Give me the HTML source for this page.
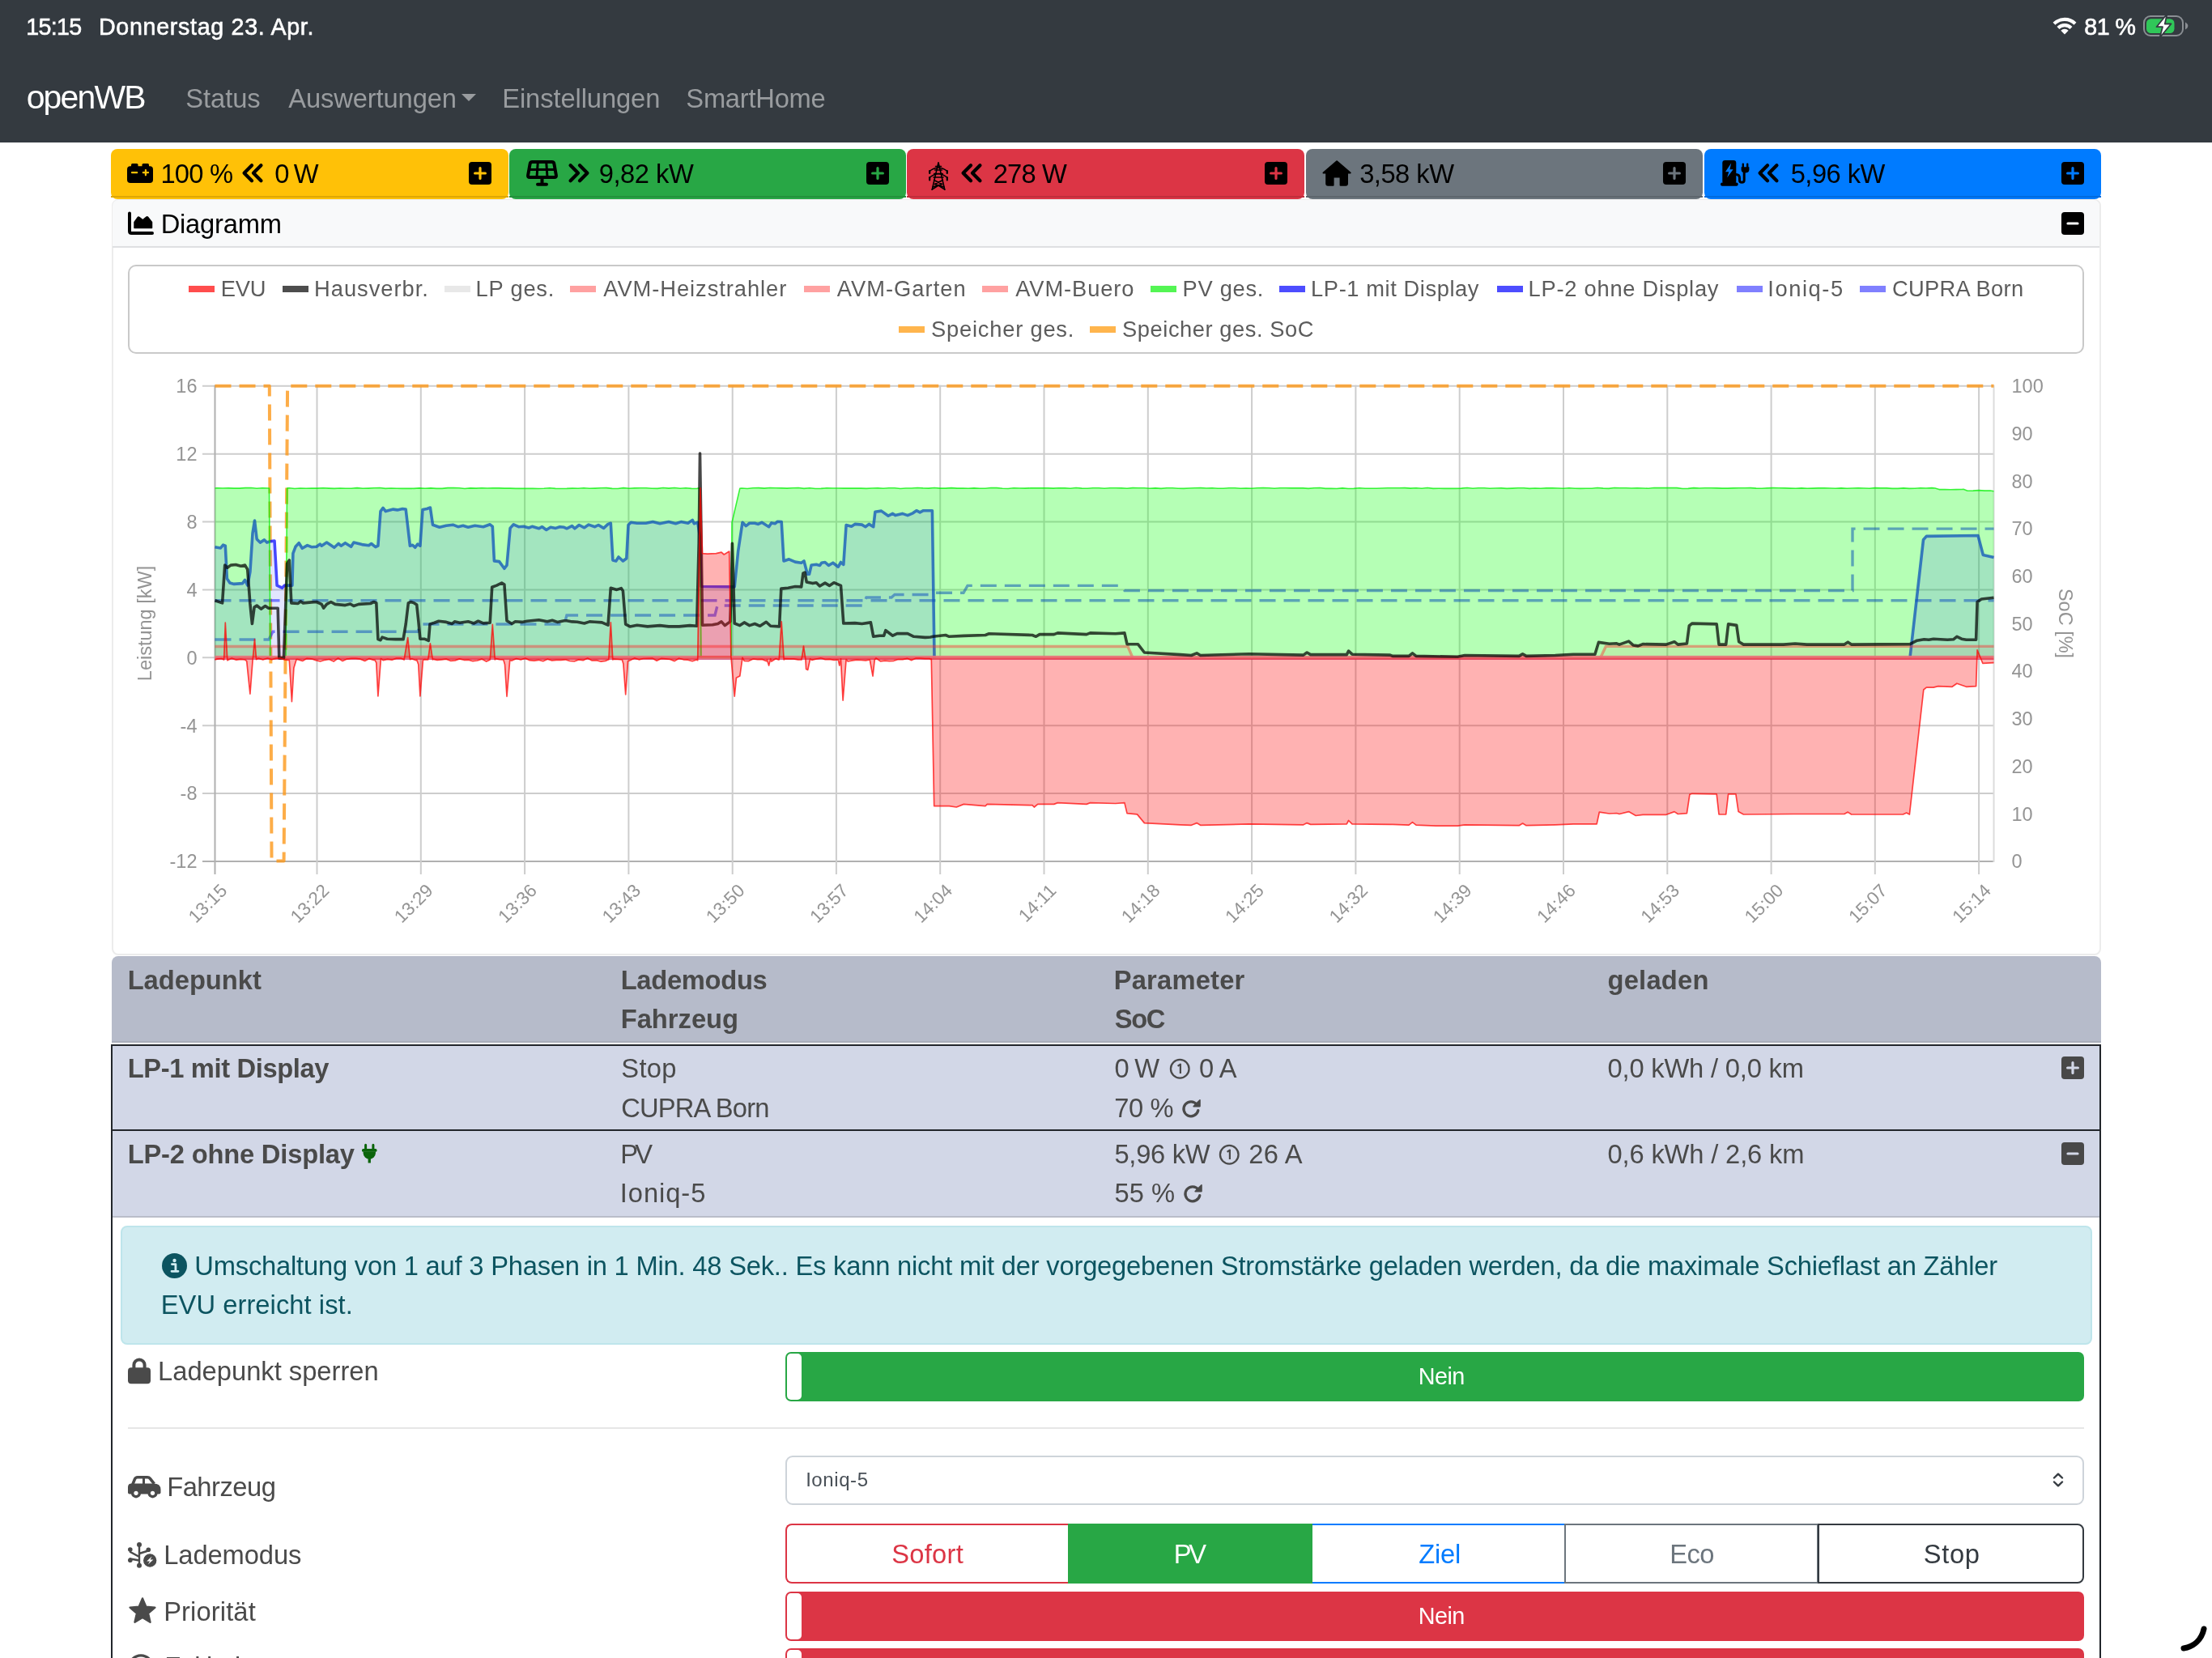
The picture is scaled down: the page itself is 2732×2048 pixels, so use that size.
<!DOCTYPE html><html><head><meta charset="utf-8"><title>openWB</title><style>
html,body{margin:0;padding:0;background:#fff;}
body{width:2732px;height:2048px;overflow:hidden;position:relative;font-family:"Liberation Sans",sans-serif;}
.t{position:absolute;white-space:nowrap;}
.r{position:absolute;box-sizing:border-box;}
#w{position:absolute;left:0;top:0;width:2732px;height:2048px;will-change:transform;}
</style></head><body><div id="w">
<div class="r" style="left:0px;top:0px;width:2732px;height:176px;background:#343a40;"></div>
<div class="t" style="left:32.15px;top:18.77px;font-size:28.62px;line-height:28.62px;letter-spacing:-0.640px;color:#fff;-webkit-text-stroke:0.6px #fff;">15:15</div>
<div class="t" style="left:122.01px;top:18.77px;font-size:28.62px;line-height:28.62px;letter-spacing:0.698px;color:#fff;-webkit-text-stroke:0.6px #fff;">Donnerstag 23. Apr.</div>
<div class="t" style="left:2574.36px;top:18.67px;font-size:28.62px;line-height:28.62px;letter-spacing:-0.502px;color:#fff;-webkit-text-stroke:0.6px #fff;">81 %</div>
<svg class="r" style="left:2535px;top:21px;overflow:visible" width="30" height="22" viewBox="0 0 30 22"><g fill="none" stroke="#fff" stroke-width="4.2"><path d="M2 8.3A18.5 18.5 0 0 1 28 8.3" /><path d="M7 13.4A11.4 11.4 0 0 1 23 13.4"/></g><path d="M15 21.5L10.3 16.8A6.6 6.6 0 0 1 19.7 16.8Z" fill="#fff"/></svg>
<svg class="r" style="left:2647px;top:19px;overflow:visible" width="56" height="26" viewBox="0 0 56 26"><rect x="1" y="1" width="48" height="24" rx="8" fill="none" stroke="#8a8e93" stroke-width="2"/><path d="M52 8.6Q55.3 10.3 55.3 13Q55.3 15.7 52 17.4Z" fill="#8a8e93"/><rect x="4" y="4.2" width="34.5" height="17.8" rx="5.5" fill="#30c759"/><path d="M29.5 -1.8L16.5 14.2H24L20.5 27.5L34.5 10.5H26.8Z" fill="#fff" stroke="#343a40" stroke-width="1.8" stroke-linejoin="round"/></svg>
<div class="t" style="left:32.66px;top:99.60px;font-size:40.88px;line-height:40.88px;letter-spacing:-1.779px;color:#fff;">openWB</div>
<div class="t" style="left:229.33px;top:106.02px;font-size:32.7px;line-height:32.7px;letter-spacing:-0.078px;color:#999c9f;">Status</div>
<div class="t" style="left:356.30px;top:106.02px;font-size:32.7px;line-height:32.7px;letter-spacing:-0.117px;color:#999c9f;">Auswertungen</div>
<div class="r" style="left:570px;top:116px;width:0;height:0;border-left:9px solid transparent;border-right:9px solid transparent;border-top:9px solid #999c9f;"></div>
<div class="t" style="left:620.18px;top:106.02px;font-size:32.7px;line-height:32.7px;letter-spacing:-0.090px;color:#999c9f;">Einstellungen</div>
<div class="t" style="left:847.33px;top:106.02px;font-size:32.7px;line-height:32.7px;letter-spacing:-0.247px;color:#999c9f;">SmartHome</div>
<div class="r" style="left:137px;top:184px;width:490.5px;height:62px;background:#ffc107;border-radius:8px;"></div>
<div class="r" style="left:137px;top:242px;width:490.5px;height:2px;background:#dea806;"></div>
<svg class="r" style="left:578.5px;top:200px;overflow:visible" width="28" height="28" viewBox="0 0 28 28"><rect width="28" height="28" rx="4" fill="#000"/><path d="M7.6 14H20.4M14 7.6V20.4" stroke="#ffc107" stroke-width="3.2" stroke-linecap="round"/></svg>
<div class="r" style="left:628.5px;top:184px;width:490.5px;height:62px;background:#28a745;border-radius:8px;"></div>
<div class="r" style="left:628.5px;top:242px;width:490.5px;height:2px;background:#23913c;"></div>
<svg class="r" style="left:1070.0px;top:200px;overflow:visible" width="28" height="28" viewBox="0 0 28 28"><rect width="28" height="28" rx="4" fill="#000"/><path d="M7.6 14H20.4M14 7.6V20.4" stroke="#28a745" stroke-width="3.2" stroke-linecap="round"/></svg>
<div class="r" style="left:1120px;top:184px;width:490.5px;height:62px;background:#dc3545;border-radius:8px;"></div>
<div class="r" style="left:1120px;top:242px;width:490.5px;height:2px;background:#c02e3c;"></div>
<svg class="r" style="left:1561.5px;top:200px;overflow:visible" width="28" height="28" viewBox="0 0 28 28"><rect width="28" height="28" rx="4" fill="#000"/><path d="M7.6 14H20.4M14 7.6V20.4" stroke="#dc3545" stroke-width="3.2" stroke-linecap="round"/></svg>
<div class="r" style="left:1612.5px;top:184px;width:490.5px;height:62px;background:#6c757d;border-radius:8px;"></div>
<div class="r" style="left:1612.5px;top:242px;width:490.5px;height:2px;background:#5e666d;"></div>
<svg class="r" style="left:2054.0px;top:200px;overflow:visible" width="28" height="28" viewBox="0 0 28 28"><rect width="28" height="28" rx="4" fill="#000"/><path d="M7.6 14H20.4M14 7.6V20.4" stroke="#6c757d" stroke-width="3.2" stroke-linecap="round"/></svg>
<div class="r" style="left:2104.5px;top:184px;width:490.5px;height:62px;background:#007bff;border-radius:8px;"></div>
<div class="r" style="left:2104.5px;top:242px;width:490.5px;height:2px;background:#006bde;"></div>
<svg class="r" style="left:2546.0px;top:200px;overflow:visible" width="28" height="28" viewBox="0 0 28 28"><rect width="28" height="28" rx="4" fill="#000"/><path d="M7.6 14H20.4M14 7.6V20.4" stroke="#007bff" stroke-width="3.2" stroke-linecap="round"/></svg>
<svg class="r" style="left:157.3px;top:202px;overflow:visible" width="32" height="24" viewBox="0 0 32 24"><rect x="5" y="0" width="8.5" height="6" rx="1.5" fill="#000"/><rect x="18.5" y="0" width="8.5" height="6" rx="1.5" fill="#000"/><rect x="0" y="3.2" width="32" height="20.8" rx="4" fill="#000"/><path d="M6 11.2H12.2M19.8 11.2H26M22.9 8.1V14.3" stroke="#ffc107" stroke-width="2.2" stroke-linecap="round"/></svg>
<div class="t" style="left:198.45px;top:198.72px;font-size:32.7px;line-height:32.7px;letter-spacing:-0.752px;color:#000;">100 %</div>
<svg class="r" style="left:299px;top:202px;overflow:visible" width="26" height="24" viewBox="0 0 26 24"><path d="M12 2.3L2.6 11.8L12 21.3M23.4 2.3L14 11.8L23.4 21.3" stroke="#000" stroke-width="4.3" fill="none" stroke-linecap="round" stroke-linejoin="round"/></svg>
<div class="t" style="left:339.29px;top:198.72px;font-size:32.7px;line-height:32.7px;letter-spacing:-1.917px;color:#000;">0 W</div>
<svg class="r" style="left:650px;top:198px;overflow:visible" width="39" height="32" viewBox="0 0 39 32"><path d="M7.5 2H31.5Q34 2 34.4 4.5L36.9 18.5Q37.3 21 34.8 21H4.2Q1.7 21 2.1 18.5L4.6 4.5Q5 2 7.5 2Z" fill="none" stroke="#000" stroke-width="4" stroke-linejoin="round"/><path d="M3.5 11.5H35.5M14.3 2L13 21M24.7 2L26 21" stroke="#000" stroke-width="3" fill="none"/><path d="M19.5 21V29.6M14 29.8H25" stroke="#000" stroke-width="4" stroke-linecap="round"/></svg>
<svg class="r" style="left:701.5px;top:202px;overflow:visible" width="26" height="24" viewBox="0 0 26 24"><path d="M2.6 2.3L12 11.8L2.6 21.3M14 2.3L23.4 11.8L14 21.3" stroke="#000" stroke-width="4.3" fill="none" stroke-linecap="round" stroke-linejoin="round"/></svg>
<div class="t" style="left:739.73px;top:198.72px;font-size:32.7px;line-height:32.7px;letter-spacing:-0.462px;color:#000;">9,82 kW</div>
<svg class="r" style="left:1146.5px;top:200px;overflow:visible" width="24" height="35" viewBox="0 0 24 35"><g stroke="#000" fill="none" stroke-width="1.55" stroke-linecap="round" stroke-linejoin="round"><path d="M12 0.8L4.2 34.2M12 0.8L19.8 34.2"/><path d="M8.5 5.5H15.5M7.6 10H16.4M6.8 14.5H17.2M6 19H18"/><path d="M1 11.5Q12 3 23 11.5M1 19.5Q12 10 23 19.5"/><path d="M1.2 11V14M22.8 11V14M1.2 19V22.5M22.8 19V22.5" stroke-width="2.2"/><path d="M6.5 22.5L16.6 27.5L5 31M17.5 22.5L7.4 27.5L19 31M4.2 34.2L12 29L19.8 34.2"/></g></svg>
<svg class="r" style="left:1186.7px;top:202px;overflow:visible" width="26" height="24" viewBox="0 0 26 24"><path d="M12 2.3L2.6 11.8L12 21.3M23.4 2.3L14 11.8L23.4 21.3" stroke="#000" stroke-width="4.3" fill="none" stroke-linecap="round" stroke-linejoin="round"/></svg>
<div class="t" style="left:1226.66px;top:198.72px;font-size:32.7px;line-height:32.7px;letter-spacing:-0.801px;color:#000;">278 W</div>
<svg class="r" style="left:1633px;top:198px;overflow:visible" width="36.2" height="31.7" viewBox="0 0 36.2 31.7"><path d="M18.1 1.2L1.5 15.6H5.2V28.7Q5.2 30.7 7.2 30.7H13.6V20.5H22.6V30.7H29Q31 30.7 31 28.7V15.6H34.7Z" fill="#000" stroke="#000" stroke-width="2" stroke-linejoin="round"/></svg>
<div class="t" style="left:1679.16px;top:198.72px;font-size:32.7px;line-height:32.7px;letter-spacing:-0.500px;color:#000;">3,58 kW</div>
<svg class="r" style="left:2124.6px;top:198px;overflow:visible" width="36" height="32" viewBox="0 0 36 32"><rect x="2.3" y="0" width="17" height="29" rx="3.2" fill="#000"/><rect x="0" y="27.6" width="21.7" height="4.1" rx="2" fill="#000"/><path d="M13.2 3.6L6 14.2H10.3L8.2 21.3L15.6 11.2H11.4Z" fill="#007bff"/><path d="M19 17.5Q23.5 17.5 23.5 22V24.5Q23.5 27.3 26.3 27.3Q29.2 27.3 29.2 24.5V15" stroke="#000" stroke-width="3" fill="none"/><path d="M25.6 8.3H35.4V11.2Q35.4 15.6 30.5 15.6Q25.6 15.6 25.6 11.2Z" fill="#000"/><path d="M27.8 4.6V9M33.2 4.6V9" stroke="#000" stroke-width="2.4" stroke-linecap="round"/></svg>
<svg class="r" style="left:2171px;top:202px;overflow:visible" width="26" height="24" viewBox="0 0 26 24"><path d="M12 2.3L2.6 11.8L12 21.3M23.4 2.3L14 11.8L23.4 21.3" stroke="#000" stroke-width="4.3" fill="none" stroke-linecap="round" stroke-linejoin="round"/></svg>
<div class="t" style="left:2211.69px;top:198.72px;font-size:32.7px;line-height:32.7px;letter-spacing:-0.523px;color:#000;">5,96 kW</div>
<div class="r" style="left:137.5px;top:246px;width:2457px;height:933.5px;background:#fff;border:2px solid #ececec;border-radius:8px;"></div>
<div class="r" style="left:139px;top:247px;width:2454px;height:57px;background:#f8f9fa;border-radius:7px 7px 0 0;"></div>
<div class="r" style="left:139px;top:304px;width:2454px;height:2px;background:#dee0e2;"></div>
<svg class="r" style="left:157.5px;top:262px;overflow:visible" width="32" height="28" viewBox="0 0 32 28"><path d="M2 1.5V23.5Q2 26 4.5 26H30" stroke="#000" stroke-width="4" fill="none" stroke-linecap="round"/><path d="M8 19.5V12.5L12.3 6.5Q13 5.6 13.9 6.4L18.3 9.8L22.9 6.2Q23.8 5.5 24.6 6.3L29.5 12.5V19.5Z" fill="#000" stroke="#000" stroke-width="1.5" stroke-linejoin="round"/></svg>
<div class="t" style="left:198.68px;top:260.52px;font-size:32.7px;line-height:32.7px;letter-spacing:-0.210px;color:#000;">Diagramm</div>
<svg class="r" style="left:2546px;top:262px;overflow:visible" width="28" height="28" viewBox="0 0 28 28"><rect width="28" height="28" rx="4" fill="#000"/><path d="M8 14H20" stroke="#f8f9fa" stroke-width="3.2" stroke-linecap="round"/></svg>
<div class="r" style="left:158px;top:327px;width:2416px;height:110px;background:#fff;border:2px solid #c9c9c9;border-radius:10px;"></div>
<div class="r" style="left:233px;top:353px;width:32px;height:8px;background:#ff4d4d;"></div>
<div class="t" style="left:272.72px;top:342.50px;font-size:27.29px;line-height:27.29px;letter-spacing:-0.126px;color:#5c5c5c;">EVU</div>
<div class="r" style="left:348.5px;top:353px;width:32px;height:8px;background:#4d4d4d;"></div>
<div class="t" style="left:388.12px;top:342.50px;font-size:27.29px;line-height:27.29px;letter-spacing:0.973px;color:#5c5c5c;">Hausverbr.</div>
<div class="r" style="left:548.5px;top:353px;width:32px;height:8px;background:#e8e8e8;"></div>
<div class="t" style="left:587.62px;top:342.50px;font-size:27.29px;line-height:27.29px;letter-spacing:0.789px;color:#5c5c5c;">LP ges.</div>
<div class="r" style="left:703.5px;top:353px;width:32px;height:8px;background:#ffa1a1;"></div>
<div class="t" style="left:745.30px;top:342.50px;font-size:27.29px;line-height:27.29px;letter-spacing:0.947px;color:#5c5c5c;">AVM-Heizstrahler</div>
<div class="r" style="left:992.5px;top:353px;width:32px;height:8px;background:#ffa1a1;"></div>
<div class="t" style="left:1033.80px;top:342.50px;font-size:27.29px;line-height:27.29px;letter-spacing:1.032px;color:#5c5c5c;">AVM-Garten</div>
<div class="r" style="left:1212.5px;top:353px;width:32px;height:8px;background:#ffa1a1;"></div>
<div class="t" style="left:1254.30px;top:342.50px;font-size:27.29px;line-height:27.29px;letter-spacing:0.906px;color:#5c5c5c;">AVM-Buero</div>
<div class="r" style="left:1421px;top:353px;width:32px;height:8px;background:#54f554;"></div>
<div class="t" style="left:1460.62px;top:342.50px;font-size:27.29px;line-height:27.29px;letter-spacing:0.698px;color:#5c5c5c;">PV ges.</div>
<div class="r" style="left:1579.5px;top:353px;width:32px;height:8px;background:#4d4dff;"></div>
<div class="t" style="left:1619.12px;top:342.50px;font-size:27.29px;line-height:27.29px;letter-spacing:0.581px;color:#5c5c5c;">LP-1 mit Display</div>
<div class="r" style="left:1848.5px;top:353px;width:32px;height:8px;background:#4d4dff;"></div>
<div class="t" style="left:1887.62px;top:342.50px;font-size:27.29px;line-height:27.29px;letter-spacing:0.745px;color:#5c5c5c;">LP-2 ohne Display</div>
<div class="r" style="left:2144.5px;top:353px;width:32px;height:8px;background:#8080ff;"></div>
<div class="t" style="left:2183.34px;top:342.50px;font-size:27.29px;line-height:27.29px;letter-spacing:1.563px;color:#5c5c5c;">Ioniq-5</div>
<div class="r" style="left:2296.5px;top:353px;width:32px;height:8px;background:#8080ff;"></div>
<div class="t" style="left:2336.94px;top:342.50px;font-size:27.29px;line-height:27.29px;letter-spacing:0.329px;color:#5c5c5c;">CUPRA Born</div>
<div class="r" style="left:1110px;top:403px;width:32px;height:8px;background:#ffb54d;"></div>
<div class="t" style="left:1150.07px;top:392.50px;font-size:27.29px;line-height:27.29px;letter-spacing:0.792px;color:#5c5c5c;">Speicher ges.</div>
<div class="r" style="left:1346px;top:403px;width:32px;height:8px;background:#ffb54d;"></div>
<div class="t" style="left:1386.07px;top:392.50px;font-size:27.29px;line-height:27.29px;letter-spacing:0.558px;color:#5c5c5c;">Speicher ges. SoC</div>
<svg class="r" style="left:0;top:440px" width="2732" height="740" viewBox="0 440 2732 740" font-family="Liberation Sans, sans-serif"><path d="M250 476.8H2462.5" stroke="#cdcdcd" stroke-width="2"/><path d="M250 560.7H2462.5" stroke="#cdcdcd" stroke-width="2"/><path d="M250 644.5H2462.5" stroke="#cdcdcd" stroke-width="2"/><path d="M250 728.4H2462.5" stroke="#cdcdcd" stroke-width="2"/><path d="M250 812.3H2462.5" stroke="#cdcdcd" stroke-width="2"/><path d="M250 896.2H2462.5" stroke="#cdcdcd" stroke-width="2"/><path d="M250 980.0H2462.5" stroke="#cdcdcd" stroke-width="2"/><path d="M250 1063.9H2462.5" stroke="#b0b0b0" stroke-width="2"/><path d="M265.5 475.8V1080" stroke="#b0b0b0" stroke-width="2"/><path d="M391.5 475.8V1080" stroke="#cdcdcd" stroke-width="2"/><path d="M519.8 475.8V1080" stroke="#cdcdcd" stroke-width="2"/><path d="M648.1 475.8V1080" stroke="#cdcdcd" stroke-width="2"/><path d="M776.4 475.8V1080" stroke="#cdcdcd" stroke-width="2"/><path d="M904.7 475.8V1080" stroke="#cdcdcd" stroke-width="2"/><path d="M1032.9 475.8V1080" stroke="#cdcdcd" stroke-width="2"/><path d="M1161.2 475.8V1080" stroke="#cdcdcd" stroke-width="2"/><path d="M1289.5 475.8V1080" stroke="#cdcdcd" stroke-width="2"/><path d="M1417.8 475.8V1080" stroke="#cdcdcd" stroke-width="2"/><path d="M1546.1 475.8V1080" stroke="#cdcdcd" stroke-width="2"/><path d="M1674.4 475.8V1080" stroke="#cdcdcd" stroke-width="2"/><path d="M1802.7 475.8V1080" stroke="#cdcdcd" stroke-width="2"/><path d="M1931.0 475.8V1080" stroke="#cdcdcd" stroke-width="2"/><path d="M2059.3 475.8V1080" stroke="#cdcdcd" stroke-width="2"/><path d="M2187.6 475.8V1080" stroke="#cdcdcd" stroke-width="2"/><path d="M2315.8 475.8V1080" stroke="#cdcdcd" stroke-width="2"/><path d="M2444.1 475.8V1080" stroke="#cdcdcd" stroke-width="2"/><path d="M2462.5 475.8V1064.9" stroke="#dcdcdc" stroke-width="2"/><path d="M265.5 476.8 L332.8 476.8 L335.5 1063.5 L350.6 1063.5 L355.1 476.8 L2462.5 476.8" fill="none" stroke="rgba(252,150,20,0.78)" stroke-width="4" stroke-dasharray="20 10" stroke-linejoin="round"/><path d="M265.5 790.0 L332.0 790.0 L337.0 780.3 L516.0 780.3 L518.5 771.0 L697.0 771.0 L700.0 760.0 L883.0 760.0 L886.0 748.0 L1066.0 748.0 L1070.0 738.0 L1101.0 738.0 L1105.0 734.5 L1150.0 734.5 L1154.0 732.3 L1190.0 732.3 L1195.0 723.4 L1384.0 723.4 L1389.0 729.5 L2288.0 729.5 L2288.0 653.1 L2462.5 653.1" fill="none" stroke="rgba(0,0,255,0.5)" stroke-width="3.4" stroke-dasharray="20 10"/><path d="M265.5 741.8 L2462.5 741.8" fill="none" stroke="rgba(0,0,255,0.5)" stroke-width="3.4" stroke-dasharray="20 10"/><path d="M2359.0 812.4 L2375.5 666.7 L2379.3 662.4 L2443.0 661.5 L2449.3 685.5 L2462.5 688.4" fill="none" stroke="rgba(0,0,255,0.72)" stroke-width="3.6" stroke-linejoin="round"/><path d="M265.5 675.7 L272.5 676.9 L275.6 673.2 L278.3 674.2 L280.4 714.8 L283.9 720.0 L289.1 721.4 L299.5 720.6 L302.6 716.4 L305.7 723.1 L308.9 706.4 L312.0 658.6 L314.5 643.0 L317.2 665.9 L321.3 670.1 L326.5 666.9 L329.7 670.1 L334.9 668.6 L339.0 668.0 L342.1 723.1 L348.4 726.2 L351.5 723.1 L360.9 723.1 L361.9 683.6 L365.0 675.3 L369.2 670.7 L373.3 677.3 L379.6 673.6 L384.8 675.7 L391.0 675.3 L395.2 672.1 L397.2 674.2 L403.5 670.1 L412.8 676.3 L418.0 671.5 L421.2 674.2 L426.4 670.7 L433.6 675.3 L436.8 670.1 L447.1 672.6 L455.5 673.8 L458.6 671.5 L463.8 675.7 L466.9 674.2 L470.0 631.6 L473.1 627.4 L476.3 631.6 L485.6 629.1 L490.8 629.9 L497.1 628.5 L501.2 629.1 L506.4 674.2 L509.5 673.2 L512.7 676.3 L515.8 672.1 L518.9 674.2 L522.0 629.5 L527.2 628.5 L531.4 627.0 L534.5 648.2 L542.8 651.3 L551.1 649.3 L559.4 648.2 L565.7 650.7 L571.9 649.3 L578.2 651.3 L586.5 649.3 L596.9 650.7 L605.2 647.8 L608.3 650.3 L610.4 692.9 L616.6 693.6 L622.9 702.3 L626.0 698.1 L630.1 652.4 L634.3 647.8 L640.5 650.7 L646.8 650.3 L653.0 652.0 L657.2 650.3 L665.5 652.8 L669.6 650.7 L674.8 654.5 L680.0 651.3 L686.3 652.4 L691.5 650.7 L696.7 651.3 L700.0 652.8 L706.5 649.6 L709.8 652.8 L715.2 648.5 L721.7 651.8 L727.1 648.1 L734.7 650.7 L739.1 648.5 L745.6 652.4 L751.0 647.4 L754.3 646.3 L756.9 691.9 L760.8 693.0 L764.0 688.0 L769.4 693.0 L773.8 689.7 L776.0 648.5 L779.2 645.3 L786.8 646.3 L797.7 646.3 L806.3 644.6 L815.0 646.8 L825.9 644.6 L834.5 646.8 L841.1 644.6 L849.7 646.3 L855.2 642.4 L857.3 646.8 L861.7 645.3 L864.3 661.5 L866.0 724.5 L907.2 724.9 L911.6 681.1 L917.0 645.3 L921.4 649.6 L925.7 646.3 L932.2 646.3 L936.5 647.4 L940.9 645.3 L949.6 650.7 L952.8 645.9 L957.2 646.8 L960.4 644.2 L965.2 644.6 L968.0 693.0 L974.5 690.8 L982.1 694.1 L989.7 695.2 L993.0 693.0 L997.3 709.3 L999.5 709.3 L1002.1 698.0 L1008.2 697.3 L1012.5 698.4 L1014.7 695.2 L1019.0 694.5 L1023.4 698.4 L1028.8 695.2 L1035.3 700.2 L1038.5 694.5 L1041.8 697.3 L1045.1 648.5 L1051.6 650.2 L1055.9 647.4 L1064.6 648.1 L1068.9 650.7 L1073.3 647.4 L1078.7 650.7 L1080.9 632.2 L1088.5 631.1 L1097.1 637.2 L1102.6 634.4 L1105.8 636.6 L1114.5 634.4 L1121.0 636.6 L1127.5 633.8 L1131.9 630.7 L1136.2 632.9 L1140.5 630.7 L1151.4 630.7 L1154.0 812.4" fill="none" stroke="rgba(0,0,255,0.72)" stroke-width="3.6" stroke-linejoin="round"/><path d="M265.5 603.0 L268.0 602.7 L275.0 603.0 L282.0 602.9 L289.0 603.1 L296.0 603.1 L303.0 602.6 L310.0 602.5 L317.0 603.3 L324.0 602.8 L331.0 603.0 L332.5 603.0 L334.0 812.5 L353.0 812.5 L354.5 603.0 L357.0 602.7 L364.0 603.5 L371.0 603.0 L378.0 603.3 L385.0 603.0 L392.0 603.1 L399.0 602.7 L406.0 603.1 L413.0 603.4 L420.0 603.0 L427.0 603.2 L434.0 603.2 L441.0 602.6 L448.0 603.3 L455.0 603.1 L462.0 602.8 L469.0 602.5 L476.0 603.4 L483.0 603.0 L490.0 603.2 L497.0 603.4 L504.0 603.2 L511.0 603.4 L518.0 602.9 L525.0 603.3 L532.0 602.9 L539.0 603.4 L546.0 603.4 L553.0 602.6 L560.0 602.6 L567.0 602.7 L574.0 603.5 L581.0 602.9 L588.0 603.1 L595.0 602.8 L602.0 603.0 L609.0 602.9 L616.0 602.9 L623.0 603.1 L630.0 603.1 L637.0 603.4 L644.0 603.2 L651.0 603.4 L658.0 603.4 L665.0 603.5 L672.0 603.2 L679.0 602.7 L686.0 603.4 L693.0 603.5 L700.0 603.4 L707.0 603.1 L714.0 603.2 L721.0 602.7 L728.0 603.3 L735.0 603.1 L742.0 602.8 L749.0 602.6 L756.0 603.4 L763.0 603.5 L770.0 602.6 L777.0 603.3 L784.0 602.9 L791.0 602.7 L798.0 602.8 L805.0 603.3 L812.0 603.4 L819.0 602.5 L826.0 603.1 L833.0 602.5 L840.0 603.2 L847.0 602.8 L854.0 603.4 L861.0 603.5 L862.0 603.0 L864.3 603.0 L866.0 812.5 L903.0 812.5 L904.0 645.5 L913.8 603.4 L916.0 603.0 L923.0 603.5 L930.0 602.8 L937.0 602.6 L944.0 603.1 L951.0 602.5 L958.0 602.7 L965.0 602.9 L972.0 603.1 L979.0 602.7 L986.0 602.5 L993.0 603.4 L1000.0 602.8 L1007.0 603.5 L1014.0 603.4 L1021.0 602.9 L1028.0 603.0 L1035.0 603.0 L1042.0 603.1 L1049.0 603.1 L1056.0 603.1 L1063.0 603.1 L1070.0 603.4 L1077.0 603.0 L1084.0 602.9 L1091.0 603.2 L1098.0 602.7 L1105.0 602.8 L1112.0 603.5 L1119.0 603.0 L1126.0 603.0 L1133.0 602.5 L1140.0 602.9 L1147.0 603.1 L1154.0 602.5 L1161.0 603.1 L1168.0 603.1 L1175.0 602.6 L1182.0 603.1 L1189.0 603.0 L1196.0 603.2 L1203.0 602.9 L1210.0 603.2 L1217.0 603.2 L1224.0 602.5 L1231.0 602.6 L1238.0 603.2 L1245.0 603.5 L1252.0 602.8 L1259.0 603.0 L1266.0 603.1 L1273.0 602.8 L1280.0 602.9 L1287.0 602.8 L1294.0 602.9 L1301.0 603.1 L1308.0 602.8 L1315.0 602.9 L1322.0 603.3 L1329.0 602.5 L1336.0 603.1 L1343.0 603.2 L1350.0 602.8 L1357.0 602.7 L1364.0 603.3 L1371.0 602.7 L1378.0 602.7 L1385.0 602.9 L1392.0 603.2 L1399.0 602.6 L1406.0 602.8 L1413.0 602.8 L1420.0 603.3 L1427.0 602.9 L1434.0 603.4 L1441.0 602.7 L1448.0 602.8 L1455.0 603.2 L1462.0 603.4 L1469.0 603.0 L1476.0 602.7 L1483.0 602.6 L1490.0 603.0 L1497.0 602.7 L1504.0 603.3 L1511.0 603.3 L1518.0 602.7 L1525.0 602.8 L1532.0 603.3 L1539.0 603.1 L1546.0 603.3 L1553.0 602.8 L1560.0 602.6 L1567.0 602.8 L1574.0 603.3 L1581.0 602.8 L1588.0 602.8 L1595.0 602.9 L1602.0 602.9 L1609.0 602.9 L1616.0 603.4 L1623.0 602.7 L1630.0 602.5 L1637.0 603.4 L1644.0 603.4 L1651.0 603.5 L1658.0 602.9 L1665.0 603.5 L1672.0 603.4 L1679.0 602.7 L1686.0 603.2 L1693.0 603.3 L1700.0 603.2 L1707.0 603.0 L1714.0 602.8 L1721.0 602.8 L1728.0 602.7 L1735.0 602.6 L1742.0 603.1 L1749.0 602.8 L1756.0 603.3 L1763.0 602.5 L1770.0 603.4 L1777.0 603.2 L1784.0 603.4 L1791.0 603.4 L1798.0 603.4 L1805.0 603.1 L1812.0 602.5 L1819.0 603.2 L1826.0 602.7 L1833.0 602.8 L1840.0 603.2 L1847.0 603.0 L1854.0 602.9 L1861.0 603.4 L1868.0 603.1 L1875.0 602.8 L1882.0 602.8 L1889.0 603.4 L1896.0 603.0 L1903.0 603.3 L1910.0 602.9 L1917.0 602.7 L1924.0 603.0 L1931.0 603.3 L1938.0 602.7 L1945.0 603.3 L1952.0 603.4 L1959.0 603.3 L1966.0 603.3 L1973.0 602.5 L1980.0 603.1 L1987.0 603.4 L1994.0 602.5 L2001.0 602.8 L2008.0 602.8 L2015.0 603.0 L2022.0 602.9 L2029.0 603.0 L2036.0 603.3 L2043.0 602.5 L2050.0 602.6 L2057.0 602.6 L2064.0 602.6 L2071.0 602.6 L2078.0 603.5 L2085.0 603.4 L2092.0 602.6 L2099.0 603.0 L2106.0 602.8 L2113.0 602.8 L2120.0 602.9 L2127.0 603.1 L2134.0 603.1 L2141.0 602.9 L2148.0 602.7 L2155.0 602.8 L2162.0 602.6 L2169.0 603.1 L2176.0 603.2 L2183.0 602.9 L2190.0 602.6 L2197.0 602.7 L2204.0 602.9 L2211.0 603.1 L2218.0 603.3 L2225.0 602.9 L2232.0 603.3 L2239.0 603.1 L2246.0 602.9 L2253.0 602.9 L2260.0 603.0 L2267.0 603.2 L2274.0 602.9 L2281.0 603.2 L2288.0 603.0 L2295.0 602.7 L2302.0 603.0 L2309.0 603.2 L2316.0 602.6 L2323.0 602.9 L2330.0 602.9 L2337.0 603.4 L2344.0 603.4 L2351.0 602.9 L2358.0 603.4 L2365.0 603.3 L2372.0 602.8 L2379.0 603.0 L2386.0 602.6 L2390.0 603.0 L2395.0 604.6 L2402.0 604.5 L2409.0 604.7 L2416.0 604.6 L2423.0 604.5 L2425.0 604.3 L2430.0 606.2 L2437.0 606.1 L2444.0 605.6 L2451.0 606.1 L2458.0 606.0 L2462.5 606.7 L2462.5 812.5 L265.5 812.5 Z" fill="rgba(10,255,10,0.3)" stroke="none"/><path d="M265.5 812.5 L2359.0 812.4 L2375.5 666.7 L2379.3 662.4 L2443.0 661.5 L2449.3 685.5 L2462.5 688.4 L2462.5 812.5 L265.5 812.5 Z" fill="rgba(61,82,248,0.15)" stroke="none"/><path d="M265.5 675.7 L272.5 676.9 L275.6 673.2 L278.3 674.2 L280.4 714.8 L283.9 720.0 L289.1 721.4 L299.5 720.6 L302.6 716.4 L305.7 723.1 L308.9 706.4 L312.0 658.6 L314.5 643.0 L317.2 665.9 L321.3 670.1 L326.5 666.9 L329.7 670.1 L334.9 668.6 L339.0 668.0 L342.1 723.1 L348.4 726.2 L351.5 723.1 L360.9 723.1 L361.9 683.6 L365.0 675.3 L369.2 670.7 L373.3 677.3 L379.6 673.6 L384.8 675.7 L391.0 675.3 L395.2 672.1 L397.2 674.2 L403.5 670.1 L412.8 676.3 L418.0 671.5 L421.2 674.2 L426.4 670.7 L433.6 675.3 L436.8 670.1 L447.1 672.6 L455.5 673.8 L458.6 671.5 L463.8 675.7 L466.9 674.2 L470.0 631.6 L473.1 627.4 L476.3 631.6 L485.6 629.1 L490.8 629.9 L497.1 628.5 L501.2 629.1 L506.4 674.2 L509.5 673.2 L512.7 676.3 L515.8 672.1 L518.9 674.2 L522.0 629.5 L527.2 628.5 L531.4 627.0 L534.5 648.2 L542.8 651.3 L551.1 649.3 L559.4 648.2 L565.7 650.7 L571.9 649.3 L578.2 651.3 L586.5 649.3 L596.9 650.7 L605.2 647.8 L608.3 650.3 L610.4 692.9 L616.6 693.6 L622.9 702.3 L626.0 698.1 L630.1 652.4 L634.3 647.8 L640.5 650.7 L646.8 650.3 L653.0 652.0 L657.2 650.3 L665.5 652.8 L669.6 650.7 L674.8 654.5 L680.0 651.3 L686.3 652.4 L691.5 650.7 L696.7 651.3 L700.0 652.8 L706.5 649.6 L709.8 652.8 L715.2 648.5 L721.7 651.8 L727.1 648.1 L734.7 650.7 L739.1 648.5 L745.6 652.4 L751.0 647.4 L754.3 646.3 L756.9 691.9 L760.8 693.0 L764.0 688.0 L769.4 693.0 L773.8 689.7 L776.0 648.5 L779.2 645.3 L786.8 646.3 L797.7 646.3 L806.3 644.6 L815.0 646.8 L825.9 644.6 L834.5 646.8 L841.1 644.6 L849.7 646.3 L855.2 642.4 L857.3 646.8 L861.7 645.3 L864.3 661.5 L866.0 724.5 L907.2 724.9 L911.6 681.1 L917.0 645.3 L921.4 649.6 L925.7 646.3 L932.2 646.3 L936.5 647.4 L940.9 645.3 L949.6 650.7 L952.8 645.9 L957.2 646.8 L960.4 644.2 L965.2 644.6 L968.0 693.0 L974.5 690.8 L982.1 694.1 L989.7 695.2 L993.0 693.0 L997.3 709.3 L999.5 709.3 L1002.1 698.0 L1008.2 697.3 L1012.5 698.4 L1014.7 695.2 L1019.0 694.5 L1023.4 698.4 L1028.8 695.2 L1035.3 700.2 L1038.5 694.5 L1041.8 697.3 L1045.1 648.5 L1051.6 650.2 L1055.9 647.4 L1064.6 648.1 L1068.9 650.7 L1073.3 647.4 L1078.7 650.7 L1080.9 632.2 L1088.5 631.1 L1097.1 637.2 L1102.6 634.4 L1105.8 636.6 L1114.5 634.4 L1121.0 636.6 L1127.5 633.8 L1131.9 630.7 L1136.2 632.9 L1140.5 630.7 L1151.4 630.7 L1154.0 812.4 L2462.5 812.5 L2462.5 812.5 L265.5 812.5 Z" fill="rgba(61,82,248,0.15)" stroke="none"/><path d="M265.5 603.0 L268.0 602.7 L275.0 603.0 L282.0 602.9 L289.0 603.1 L296.0 603.1 L303.0 602.6 L310.0 602.5 L317.0 603.3 L324.0 602.8 L331.0 603.0 L332.5 603.0 L334.0 812.5 L353.0 812.5 L354.5 603.0 L357.0 602.7 L364.0 603.5 L371.0 603.0 L378.0 603.3 L385.0 603.0 L392.0 603.1 L399.0 602.7 L406.0 603.1 L413.0 603.4 L420.0 603.0 L427.0 603.2 L434.0 603.2 L441.0 602.6 L448.0 603.3 L455.0 603.1 L462.0 602.8 L469.0 602.5 L476.0 603.4 L483.0 603.0 L490.0 603.2 L497.0 603.4 L504.0 603.2 L511.0 603.4 L518.0 602.9 L525.0 603.3 L532.0 602.9 L539.0 603.4 L546.0 603.4 L553.0 602.6 L560.0 602.6 L567.0 602.7 L574.0 603.5 L581.0 602.9 L588.0 603.1 L595.0 602.8 L602.0 603.0 L609.0 602.9 L616.0 602.9 L623.0 603.1 L630.0 603.1 L637.0 603.4 L644.0 603.2 L651.0 603.4 L658.0 603.4 L665.0 603.5 L672.0 603.2 L679.0 602.7 L686.0 603.4 L693.0 603.5 L700.0 603.4 L707.0 603.1 L714.0 603.2 L721.0 602.7 L728.0 603.3 L735.0 603.1 L742.0 602.8 L749.0 602.6 L756.0 603.4 L763.0 603.5 L770.0 602.6 L777.0 603.3 L784.0 602.9 L791.0 602.7 L798.0 602.8 L805.0 603.3 L812.0 603.4 L819.0 602.5 L826.0 603.1 L833.0 602.5 L840.0 603.2 L847.0 602.8 L854.0 603.4 L861.0 603.5 L862.0 603.0 L864.3 603.0 L866.0 812.5 L903.0 812.5 L904.0 645.5 L913.8 603.4 L916.0 603.0 L923.0 603.5 L930.0 602.8 L937.0 602.6 L944.0 603.1 L951.0 602.5 L958.0 602.7 L965.0 602.9 L972.0 603.1 L979.0 602.7 L986.0 602.5 L993.0 603.4 L1000.0 602.8 L1007.0 603.5 L1014.0 603.4 L1021.0 602.9 L1028.0 603.0 L1035.0 603.0 L1042.0 603.1 L1049.0 603.1 L1056.0 603.1 L1063.0 603.1 L1070.0 603.4 L1077.0 603.0 L1084.0 602.9 L1091.0 603.2 L1098.0 602.7 L1105.0 602.8 L1112.0 603.5 L1119.0 603.0 L1126.0 603.0 L1133.0 602.5 L1140.0 602.9 L1147.0 603.1 L1154.0 602.5 L1161.0 603.1 L1168.0 603.1 L1175.0 602.6 L1182.0 603.1 L1189.0 603.0 L1196.0 603.2 L1203.0 602.9 L1210.0 603.2 L1217.0 603.2 L1224.0 602.5 L1231.0 602.6 L1238.0 603.2 L1245.0 603.5 L1252.0 602.8 L1259.0 603.0 L1266.0 603.1 L1273.0 602.8 L1280.0 602.9 L1287.0 602.8 L1294.0 602.9 L1301.0 603.1 L1308.0 602.8 L1315.0 602.9 L1322.0 603.3 L1329.0 602.5 L1336.0 603.1 L1343.0 603.2 L1350.0 602.8 L1357.0 602.7 L1364.0 603.3 L1371.0 602.7 L1378.0 602.7 L1385.0 602.9 L1392.0 603.2 L1399.0 602.6 L1406.0 602.8 L1413.0 602.8 L1420.0 603.3 L1427.0 602.9 L1434.0 603.4 L1441.0 602.7 L1448.0 602.8 L1455.0 603.2 L1462.0 603.4 L1469.0 603.0 L1476.0 602.7 L1483.0 602.6 L1490.0 603.0 L1497.0 602.7 L1504.0 603.3 L1511.0 603.3 L1518.0 602.7 L1525.0 602.8 L1532.0 603.3 L1539.0 603.1 L1546.0 603.3 L1553.0 602.8 L1560.0 602.6 L1567.0 602.8 L1574.0 603.3 L1581.0 602.8 L1588.0 602.8 L1595.0 602.9 L1602.0 602.9 L1609.0 602.9 L1616.0 603.4 L1623.0 602.7 L1630.0 602.5 L1637.0 603.4 L1644.0 603.4 L1651.0 603.5 L1658.0 602.9 L1665.0 603.5 L1672.0 603.4 L1679.0 602.7 L1686.0 603.2 L1693.0 603.3 L1700.0 603.2 L1707.0 603.0 L1714.0 602.8 L1721.0 602.8 L1728.0 602.7 L1735.0 602.6 L1742.0 603.1 L1749.0 602.8 L1756.0 603.3 L1763.0 602.5 L1770.0 603.4 L1777.0 603.2 L1784.0 603.4 L1791.0 603.4 L1798.0 603.4 L1805.0 603.1 L1812.0 602.5 L1819.0 603.2 L1826.0 602.7 L1833.0 602.8 L1840.0 603.2 L1847.0 603.0 L1854.0 602.9 L1861.0 603.4 L1868.0 603.1 L1875.0 602.8 L1882.0 602.8 L1889.0 603.4 L1896.0 603.0 L1903.0 603.3 L1910.0 602.9 L1917.0 602.7 L1924.0 603.0 L1931.0 603.3 L1938.0 602.7 L1945.0 603.3 L1952.0 603.4 L1959.0 603.3 L1966.0 603.3 L1973.0 602.5 L1980.0 603.1 L1987.0 603.4 L1994.0 602.5 L2001.0 602.8 L2008.0 602.8 L2015.0 603.0 L2022.0 602.9 L2029.0 603.0 L2036.0 603.3 L2043.0 602.5 L2050.0 602.6 L2057.0 602.6 L2064.0 602.6 L2071.0 602.6 L2078.0 603.5 L2085.0 603.4 L2092.0 602.6 L2099.0 603.0 L2106.0 602.8 L2113.0 602.8 L2120.0 602.9 L2127.0 603.1 L2134.0 603.1 L2141.0 602.9 L2148.0 602.7 L2155.0 602.8 L2162.0 602.6 L2169.0 603.1 L2176.0 603.2 L2183.0 602.9 L2190.0 602.6 L2197.0 602.7 L2204.0 602.9 L2211.0 603.1 L2218.0 603.3 L2225.0 602.9 L2232.0 603.3 L2239.0 603.1 L2246.0 602.9 L2253.0 602.9 L2260.0 603.0 L2267.0 603.2 L2274.0 602.9 L2281.0 603.2 L2288.0 603.0 L2295.0 602.7 L2302.0 603.0 L2309.0 603.2 L2316.0 602.6 L2323.0 602.9 L2330.0 602.9 L2337.0 603.4 L2344.0 603.4 L2351.0 602.9 L2358.0 603.4 L2365.0 603.3 L2372.0 602.8 L2379.0 603.0 L2386.0 602.6 L2390.0 603.0 L2395.0 604.6 L2402.0 604.5 L2409.0 604.7 L2416.0 604.6 L2423.0 604.5 L2425.0 604.3 L2430.0 606.2 L2437.0 606.1 L2444.0 605.6 L2451.0 606.1 L2458.0 606.0 L2462.5 606.7" fill="none" stroke="rgba(0,240,0,0.75)" stroke-width="1.6" stroke-linejoin="round"/><path d="M265.5 798.5 L1393.0 798.5 L1399.0 812.5 L1976.6 812.5 L1983.3 798.4 L2462.5 798.4 L2462.5 812.5 L265.5 812.5 Z" fill="rgba(255,0,0,0.06)" stroke="none"/><path d="M265.5 798.5 L1393.0 798.5 L1399.0 812.5" fill="none" stroke="rgba(255,40,40,0.42)" stroke-width="3.4"/><path d="M1976.6 812.5 L1983.3 798.4 L2462.5 798.4" fill="none" stroke="rgba(255,40,40,0.42)" stroke-width="3.4"/><rect x="265.5" y="809.9" width="2197.0" height="4.1" fill="rgba(236,112,120,0.92)"/><rect x="265.5" y="813.8" width="2197.0" height="1.0" fill="rgba(200,60,112,0.95)"/><path d="M265.5 741.8 L274.6 744.9 L277.7 698.1 L280.8 701.2 L285.0 698.1 L291.2 697.5 L297.4 699.2 L302.6 698.1 L305.7 703.3 L308.9 746.0 L311.4 770.5 L314.1 750.1 L317.2 748.0 L322.4 752.2 L327.6 748.5 L331.7 751.2 L343.2 751.2 L344.8 812.9 L350.5 812.9 L352.5 756.4 L354.6 696.1 L357.3 691.9 L359.8 744.9 L368.1 745.5 L371.2 742.8 L374.4 744.9 L384.8 743.9 L391.0 743.5 L397.2 746.4 L399.7 751.2 L403.5 746.4 L408.7 743.5 L413.9 746.4 L426.4 747.6 L432.6 746.0 L436.8 748.5 L443.0 746.4 L457.5 745.5 L461.7 743.5 L464.8 744.9 L466.9 789.6 L470.0 790.7 L472.1 787.1 L478.3 789.2 L488.7 789.6 L498.1 789.6 L501.2 770.9 L504.3 744.9 L507.5 743.5 L511.6 744.9 L514.7 747.0 L516.8 766.8 L518.9 789.2 L524.1 789.2 L529.3 791.3 L531.0 770.9 L536.6 769.2 L541.8 767.2 L551.1 768.4 L558.4 770.5 L561.5 767.8 L567.8 769.2 L578.2 767.8 L585.4 769.9 L590.6 767.2 L596.9 769.9 L605.2 769.2 L607.7 725.2 L613.5 723.1 L619.7 720.0 L622.9 722.0 L626.0 766.8 L632.2 770.5 L636.4 767.8 L644.7 768.4 L650.9 767.2 L665.5 765.7 L675.9 767.8 L682.1 766.3 L688.4 768.4 L696.7 766.8 L700.0 766.8 L706.5 767.9 L713.0 768.3 L721.7 770.0 L728.2 767.9 L734.7 768.3 L743.4 768.9 L751.0 772.2 L754.3 726.2 L761.8 728.4 L767.3 726.6 L769.4 729.9 L772.7 771.1 L778.1 773.9 L786.8 772.2 L799.8 773.9 L815.0 772.6 L825.9 773.9 L838.9 773.9 L851.9 772.6 L860.6 773.3 L863.2 670.2 L864.5 560.0 L866.2 670.2 L867.5 772.2 L880.1 771.8 L886.6 770.5 L891.0 767.9 L895.3 772.6 L901.8 767.9 L903.6 713.6 L904.4 671.3 L905.7 713.6 L907.2 770.0 L913.8 772.6 L919.2 768.9 L925.7 772.6 L932.2 770.5 L938.7 773.3 L946.3 768.3 L951.7 773.3 L962.6 773.9 L964.8 727.1 L973.4 726.2 L982.1 724.5 L989.7 724.9 L991.9 708.2 L994.1 707.1 L996.2 719.0 L1003.8 720.6 L1008.2 719.7 L1012.5 724.0 L1019.0 720.1 L1024.4 723.4 L1029.9 719.7 L1038.5 723.4 L1041.8 770.0 L1055.9 769.6 L1064.6 770.5 L1075.4 768.9 L1078.7 786.3 L1086.3 785.2 L1091.7 785.2 L1093.9 778.7 L1102.6 785.2 L1108.0 782.6 L1121.0 782.6 L1128.6 786.3 L1142.7 787.4 L1149.2 787.0 L1152.3 786.3 L1167.9 784.5 L1172.4 786.3 L1190.3 785.4 L1217.0 784.5 L1221.5 782.8 L1275.0 784.5 L1279.5 786.3 L1284.0 783.6 L1301.8 783.6 L1306.3 781.9 L1342.0 783.6 L1346.5 781.9 L1377.7 782.8 L1388.9 781.9 L1392.0 795.7 L1405.4 795.7 L1413.4 806.0 L1458.0 808.6 L1471.4 809.5 L1478.1 806.8 L1482.6 809.5 L1542.8 807.7 L1609.8 809.1 L1614.2 806.0 L1618.7 808.6 L1663.3 808.6 L1665.6 804.2 L1670.0 808.2 L1716.9 809.1 L1720.0 810.4 L1740.1 810.4 L1744.5 806.8 L1749.0 810.4 L1800.3 811.3 L1809.2 809.5 L1876.2 810.4 L1880.6 807.7 L1885.1 810.4 L1920.8 809.5 L1943.1 808.2 L1969.9 808.2 L1974.4 793.4 L1987.7 795.2 L1996.7 794.8 L2000.0 796.1 L2011.6 792.1 L2017.4 797.0 L2023.2 797.9 L2029.0 795.6 L2057.9 796.1 L2068.0 792.7 L2072.4 796.1 L2083.4 795.0 L2086.3 773.0 L2089.8 770.1 L2120.2 770.9 L2123.0 796.1 L2131.7 796.1 L2134.6 770.9 L2144.8 772.4 L2147.7 792.7 L2153.4 796.1 L2202.7 796.1 L2217.1 795.0 L2231.6 796.1 L2277.9 796.1 L2282.3 793.2 L2286.6 796.1 L2359.0 795.6 L2367.7 791.2 L2376.4 789.8 L2382.2 790.3 L2388.0 789.2 L2405.3 790.3 L2412.6 789.8 L2416.9 786.3 L2422.7 789.2 L2428.5 790.3 L2440.6 790.3 L2442.1 743.4 L2447.3 740.0 L2462.5 738.2" fill="none" stroke="rgba(0,0,0,0.72)" stroke-width="3.6" stroke-linejoin="round"/><path d="M265.5 815.0 L268.0 814.2 L273.5 813.5 L276.6 815.0 L276.6 815.0 L278.3 769.2 L280.8 815.0 L280.8 815.7 L286.3 813.1 L291.8 815.2 L297.3 814.4 L302.6 815.0 L304.7 816.7 L308.9 857.2 L312.0 816.7 L314.5 789.6 L316.6 814.6 L319.3 813.1 L324.8 815.0 L330.3 813.0 L335.8 814.7 L341.3 813.1 L346.8 813.2 L351.5 815.0 L357.3 815.6 L360.4 866.6 L362.9 825.0 L366.1 814.6 L368.1 814.7 L373.6 816.4 L379.1 813.3 L384.6 813.8 L390.1 815.6 L395.6 817.0 L401.1 815.3 L406.6 814.5 L412.1 817.1 L417.6 813.0 L423.1 816.6 L428.6 814.1 L434.1 813.4 L439.6 813.3 L445.1 814.2 L450.6 816.4 L456.1 813.6 L461.6 815.4 L462.7 815.0 L464.8 818.7 L466.9 859.9 L470.4 813.5 L473.1 815.6 L478.6 814.4 L484.1 815.2 L489.6 813.1 L495.1 813.1 L499.1 815.0 L501.2 802.1 L503.7 787.5 L506.4 814.6 L508.5 813.7 L514.0 815.8 L514.7 815.0 L516.8 820.8 L518.9 859.9 L522.4 815.6 L524.1 814.7 L528.7 815.0 L528.7 815.0 L531.4 794.8 L534.4 815.0 L534.5 814.2 L540.0 815.4 L545.5 814.8 L551.0 814.1 L556.5 816.3 L562.0 815.9 L567.5 813.9 L573.0 815.3 L578.5 815.1 L584.0 816.7 L589.5 816.0 L595.0 814.1 L600.5 817.1 L605.2 815.0 L605.3 815.0 L608.3 771.3 L611.3 815.0 L611.4 813.3 L616.9 814.6 L621.8 815.0 L623.5 820.8 L626.0 860.3 L629.7 815.6 L632.2 816.1 L637.7 813.5 L643.2 815.0 L648.7 813.0 L654.2 815.7 L659.7 816.2 L665.2 815.3 L670.7 816.7 L676.2 814.2 L681.7 815.9 L687.2 815.4 L692.7 815.4 L698.2 814.8 L703.7 816.5 L709.2 817.0 L714.7 814.9 L720.2 815.7 L725.7 813.1 L731.2 815.9 L736.7 815.6 L742.2 817.2 L747.7 816.4 L751.0 815.0 L751.8 815.0 L754.3 768.9 L756.8 815.0 L757.5 814.1 L763.0 814.5 L768.4 815.0 L769.9 819.9 L772.7 857.9 L775.5 816.7 L778.1 815.7 L783.6 812.9 L789.1 814.8 L794.6 813.5 L800.1 813.3 L805.6 813.1 L811.1 816.2 L816.6 813.4 L822.1 813.9 L827.6 814.5 L833.1 816.6 L838.6 813.2 L844.1 814.8 L849.6 815.2 L855.1 816.7 L860.2 815.0 L861.7 815.6 L864.9 602.9 L867.5 683.7 L873.6 684.1 L884.5 683.7 L891.0 682.1 L894.2 685.0 L900.7 681.1 L902.9 811.3 L907.2 860.1 L909.4 837.3 L913.8 835.1 L917.0 812.4 L919.2 816.4 L924.7 816.6 L930.2 814.0 L935.7 814.6 L941.2 814.4 L946.7 816.7 L947.4 815.0 L949.6 822.1 L951.7 813.9 L952.8 817.0 L958.3 813.5 L961.5 815.0 L962.2 815.0 L965.2 767.9 L968.2 815.0 L969.1 813.6 L974.6 813.8 L980.1 813.8 L985.6 814.9 L989.7 815.0 L990.0 815.0 L992.5 798.2 L995.0 815.0 L995.6 826.5 L997.7 827.5 L1000.6 813.9 L1002.7 815.4 L1008.2 814.0 L1013.7 812.8 L1019.2 814.6 L1024.7 814.4 L1030.2 815.3 L1035.3 815.0 L1036.8 822.1 L1038.5 813.9 L1041.1 865.1 L1045.1 814.5 L1047.2 817.0 L1052.7 815.8 L1058.2 815.1 L1063.7 815.5 L1069.2 815.8 L1074.3 815.0 L1078.0 835.1 L1080.2 815.2 L1081.9 813.0 L1087.4 816.8 L1092.9 816.2 L1098.4 816.6 L1103.9 816.3 L1109.4 814.5 L1114.9 814.6 L1120.4 813.3 L1125.9 815.6 L1131.4 813.1 L1136.9 813.1 L1142.4 813.7 L1147.9 813.5 L1150.3 815.0 L1150.3 814.0 L1153.7 995.6 L1172.4 995.6 L1181.3 997.0 L1190.3 993.4 L1217.0 995.6 L1219.3 993.4 L1275.0 994.7 L1277.3 997.0 L1281.7 993.4 L1301.8 993.4 L1306.3 991.6 L1342.0 993.4 L1346.5 991.6 L1377.7 992.5 L1388.9 991.6 L1392.0 1004.6 L1404.5 1005.9 L1413.4 1016.6 L1458.0 1018.8 L1471.4 1019.3 L1478.1 1016.6 L1482.6 1019.3 L1542.8 1017.9 L1609.8 1018.8 L1614.2 1016.6 L1618.7 1018.4 L1663.3 1017.9 L1665.6 1013.5 L1670.0 1017.9 L1716.9 1018.4 L1720.0 1018.3 L1740.1 1019.2 L1744.5 1015.7 L1749.0 1019.2 L1773.5 1020.1 L1800.3 1020.1 L1809.2 1018.8 L1876.2 1019.7 L1880.6 1017.0 L1885.1 1019.7 L1920.8 1018.8 L1943.1 1017.9 L1972.1 1017.9 L1975.3 1003.2 L1987.7 1005.0 L1996.7 1004.5 L2000.0 1005.5 L2011.6 1002.6 L2020.3 1007.5 L2029.0 1006.3 L2057.9 1006.3 L2068.0 1002.6 L2072.4 1005.5 L2083.4 1004.6 L2086.9 981.4 L2089.8 980.3 L2120.2 980.9 L2123.0 1006.0 L2131.7 1006.0 L2134.6 980.9 L2143.9 980.9 L2147.1 1002.6 L2153.4 1006.0 L2214.2 1005.5 L2277.9 1005.5 L2282.3 1003.1 L2286.6 1006.0 L2350.3 1006.0 L2354.7 1004.0 L2358.4 1006.0 L2375.8 852.0 L2379.3 849.1 L2388.0 849.1 L2393.7 847.7 L2411.1 848.3 L2416.9 844.2 L2422.7 846.2 L2428.5 848.3 L2440.6 847.7 L2442.1 802.8 L2448.8 819.3 L2462.5 818.7 L2462.5 812.5 L265.5 812.5 Z" fill="rgba(255,0,0,0.3)" stroke="none"/><path d="M265.5 815.0 L268.0 814.2 L273.5 813.5 L276.6 815.0 L276.6 815.0 L278.3 769.2 L280.8 815.0 L280.8 815.7 L286.3 813.1 L291.8 815.2 L297.3 814.4 L302.6 815.0 L304.7 816.7 L308.9 857.2 L312.0 816.7 L314.5 789.6 L316.6 814.6 L319.3 813.1 L324.8 815.0 L330.3 813.0 L335.8 814.7 L341.3 813.1 L346.8 813.2 L351.5 815.0 L357.3 815.6 L360.4 866.6 L362.9 825.0 L366.1 814.6 L368.1 814.7 L373.6 816.4 L379.1 813.3 L384.6 813.8 L390.1 815.6 L395.6 817.0 L401.1 815.3 L406.6 814.5 L412.1 817.1 L417.6 813.0 L423.1 816.6 L428.6 814.1 L434.1 813.4 L439.6 813.3 L445.1 814.2 L450.6 816.4 L456.1 813.6 L461.6 815.4 L462.7 815.0 L464.8 818.7 L466.9 859.9 L470.4 813.5 L473.1 815.6 L478.6 814.4 L484.1 815.2 L489.6 813.1 L495.1 813.1 L499.1 815.0 L501.2 802.1 L503.7 787.5 L506.4 814.6 L508.5 813.7 L514.0 815.8 L514.7 815.0 L516.8 820.8 L518.9 859.9 L522.4 815.6 L524.1 814.7 L528.7 815.0 L528.7 815.0 L531.4 794.8 L534.4 815.0 L534.5 814.2 L540.0 815.4 L545.5 814.8 L551.0 814.1 L556.5 816.3 L562.0 815.9 L567.5 813.9 L573.0 815.3 L578.5 815.1 L584.0 816.7 L589.5 816.0 L595.0 814.1 L600.5 817.1 L605.2 815.0 L605.3 815.0 L608.3 771.3 L611.3 815.0 L611.4 813.3 L616.9 814.6 L621.8 815.0 L623.5 820.8 L626.0 860.3 L629.7 815.6 L632.2 816.1 L637.7 813.5 L643.2 815.0 L648.7 813.0 L654.2 815.7 L659.7 816.2 L665.2 815.3 L670.7 816.7 L676.2 814.2 L681.7 815.9 L687.2 815.4 L692.7 815.4 L698.2 814.8 L703.7 816.5 L709.2 817.0 L714.7 814.9 L720.2 815.7 L725.7 813.1 L731.2 815.9 L736.7 815.6 L742.2 817.2 L747.7 816.4 L751.0 815.0 L751.8 815.0 L754.3 768.9 L756.8 815.0 L757.5 814.1 L763.0 814.5 L768.4 815.0 L769.9 819.9 L772.7 857.9 L775.5 816.7 L778.1 815.7 L783.6 812.9 L789.1 814.8 L794.6 813.5 L800.1 813.3 L805.6 813.1 L811.1 816.2 L816.6 813.4 L822.1 813.9 L827.6 814.5 L833.1 816.6 L838.6 813.2 L844.1 814.8 L849.6 815.2 L855.1 816.7 L860.2 815.0 L861.7 815.6 L864.9 602.9 L867.5 683.7 L873.6 684.1 L884.5 683.7 L891.0 682.1 L894.2 685.0 L900.7 681.1 L902.9 811.3 L907.2 860.1 L909.4 837.3 L913.8 835.1 L917.0 812.4 L919.2 816.4 L924.7 816.6 L930.2 814.0 L935.7 814.6 L941.2 814.4 L946.7 816.7 L947.4 815.0 L949.6 822.1 L951.7 813.9 L952.8 817.0 L958.3 813.5 L961.5 815.0 L962.2 815.0 L965.2 767.9 L968.2 815.0 L969.1 813.6 L974.6 813.8 L980.1 813.8 L985.6 814.9 L989.7 815.0 L990.0 815.0 L992.5 798.2 L995.0 815.0 L995.6 826.5 L997.7 827.5 L1000.6 813.9 L1002.7 815.4 L1008.2 814.0 L1013.7 812.8 L1019.2 814.6 L1024.7 814.4 L1030.2 815.3 L1035.3 815.0 L1036.8 822.1 L1038.5 813.9 L1041.1 865.1 L1045.1 814.5 L1047.2 817.0 L1052.7 815.8 L1058.2 815.1 L1063.7 815.5 L1069.2 815.8 L1074.3 815.0 L1078.0 835.1 L1080.2 815.2 L1081.9 813.0 L1087.4 816.8 L1092.9 816.2 L1098.4 816.6 L1103.9 816.3 L1109.4 814.5 L1114.9 814.6 L1120.4 813.3 L1125.9 815.6 L1131.4 813.1 L1136.9 813.1 L1142.4 813.7 L1147.9 813.5 L1150.3 815.0 L1150.3 814.0 L1153.7 995.6 L1172.4 995.6 L1181.3 997.0 L1190.3 993.4 L1217.0 995.6 L1219.3 993.4 L1275.0 994.7 L1277.3 997.0 L1281.7 993.4 L1301.8 993.4 L1306.3 991.6 L1342.0 993.4 L1346.5 991.6 L1377.7 992.5 L1388.9 991.6 L1392.0 1004.6 L1404.5 1005.9 L1413.4 1016.6 L1458.0 1018.8 L1471.4 1019.3 L1478.1 1016.6 L1482.6 1019.3 L1542.8 1017.9 L1609.8 1018.8 L1614.2 1016.6 L1618.7 1018.4 L1663.3 1017.9 L1665.6 1013.5 L1670.0 1017.9 L1716.9 1018.4 L1720.0 1018.3 L1740.1 1019.2 L1744.5 1015.7 L1749.0 1019.2 L1773.5 1020.1 L1800.3 1020.1 L1809.2 1018.8 L1876.2 1019.7 L1880.6 1017.0 L1885.1 1019.7 L1920.8 1018.8 L1943.1 1017.9 L1972.1 1017.9 L1975.3 1003.2 L1987.7 1005.0 L1996.7 1004.5 L2000.0 1005.5 L2011.6 1002.6 L2020.3 1007.5 L2029.0 1006.3 L2057.9 1006.3 L2068.0 1002.6 L2072.4 1005.5 L2083.4 1004.6 L2086.9 981.4 L2089.8 980.3 L2120.2 980.9 L2123.0 1006.0 L2131.7 1006.0 L2134.6 980.9 L2143.9 980.9 L2147.1 1002.6 L2153.4 1006.0 L2214.2 1005.5 L2277.9 1005.5 L2282.3 1003.1 L2286.6 1006.0 L2350.3 1006.0 L2354.7 1004.0 L2358.4 1006.0 L2375.8 852.0 L2379.3 849.1 L2388.0 849.1 L2393.7 847.7 L2411.1 848.3 L2416.9 844.2 L2422.7 846.2 L2428.5 848.3 L2440.6 847.7 L2442.1 802.8 L2448.8 819.3 L2462.5 818.7" fill="none" stroke="rgba(255,0,0,0.72)" stroke-width="1.7" stroke-linejoin="round"/><text x="243.5" y="485.1" font-size="23.5" fill="#949494" text-anchor="end">16</text><text x="243.5" y="569.0" font-size="23.5" fill="#949494" text-anchor="end">12</text><text x="243.5" y="652.8" font-size="23.5" fill="#949494" text-anchor="end">8</text><text x="243.5" y="736.7" font-size="23.5" fill="#949494" text-anchor="end">4</text><text x="243.5" y="820.6" font-size="23.5" fill="#949494" text-anchor="end">0</text><text x="243.5" y="904.5" font-size="23.5" fill="#949494" text-anchor="end">-4</text><text x="243.5" y="988.3" font-size="23.5" fill="#949494" text-anchor="end">-8</text><text x="243.5" y="1072.2" font-size="23.5" fill="#949494" text-anchor="end">-12</text><text x="2484.5" y="485.1" font-size="23.5" fill="#949494">100</text><text x="2484.5" y="543.8" font-size="23.5" fill="#949494">90</text><text x="2484.5" y="602.5" font-size="23.5" fill="#949494">80</text><text x="2484.5" y="661.2" font-size="23.5" fill="#949494">70</text><text x="2484.5" y="719.9" font-size="23.5" fill="#949494">60</text><text x="2484.5" y="778.6" font-size="23.5" fill="#949494">50</text><text x="2484.5" y="837.4" font-size="23.5" fill="#949494">40</text><text x="2484.5" y="896.1" font-size="23.5" fill="#949494">30</text><text x="2484.5" y="954.8" font-size="23.5" fill="#949494">20</text><text x="2484.5" y="1013.5" font-size="23.5" fill="#949494">10</text><text x="2484.5" y="1072.2" font-size="23.5" fill="#949494">0</text><text transform="translate(281.8 1101.5) rotate(-45)" font-size="22.5" fill="#949494" text-anchor="end">13:15</text><text transform="translate(407.8 1101.5) rotate(-45)" font-size="22.5" fill="#949494" text-anchor="end">13:22</text><text transform="translate(536.1 1101.5) rotate(-45)" font-size="22.5" fill="#949494" text-anchor="end">13:29</text><text transform="translate(664.4 1101.5) rotate(-45)" font-size="22.5" fill="#949494" text-anchor="end">13:36</text><text transform="translate(792.7 1101.5) rotate(-45)" font-size="22.5" fill="#949494" text-anchor="end">13:43</text><text transform="translate(921.0 1101.5) rotate(-45)" font-size="22.5" fill="#949494" text-anchor="end">13:50</text><text transform="translate(1049.2 1101.5) rotate(-45)" font-size="22.5" fill="#949494" text-anchor="end">13:57</text><text transform="translate(1177.5 1101.5) rotate(-45)" font-size="22.5" fill="#949494" text-anchor="end">14:04</text><text transform="translate(1305.8 1101.5) rotate(-45)" font-size="22.5" fill="#949494" text-anchor="end">14:11</text><text transform="translate(1434.1 1101.5) rotate(-45)" font-size="22.5" fill="#949494" text-anchor="end">14:18</text><text transform="translate(1562.4 1101.5) rotate(-45)" font-size="22.5" fill="#949494" text-anchor="end">14:25</text><text transform="translate(1690.7 1101.5) rotate(-45)" font-size="22.5" fill="#949494" text-anchor="end">14:32</text><text transform="translate(1819.0 1101.5) rotate(-45)" font-size="22.5" fill="#949494" text-anchor="end">14:39</text><text transform="translate(1947.3 1101.5) rotate(-45)" font-size="22.5" fill="#949494" text-anchor="end">14:46</text><text transform="translate(2075.6 1101.5) rotate(-45)" font-size="22.5" fill="#949494" text-anchor="end">14:53</text><text transform="translate(2203.9 1101.5) rotate(-45)" font-size="22.5" fill="#949494" text-anchor="end">15:00</text><text transform="translate(2332.2 1101.5) rotate(-45)" font-size="22.5" fill="#949494" text-anchor="end">15:07</text><text transform="translate(2460.4 1101.5) rotate(-45)" font-size="22.5" fill="#949494" text-anchor="end">15:14</text><text transform="translate(187 770) rotate(-90)" font-size="23.5" fill="#949494" text-anchor="middle">Leistung [kW]</text><text transform="translate(2543 770) rotate(90)" font-size="23.5" fill="#949494" text-anchor="middle">SoC [%]</text></svg>
<div class="r" style="left:138px;top:1181px;width:2457px;height:107px;background:#b6bbca;border-radius:8px 8px 0 0;border-bottom:2px solid #a9aeba;"></div>
<div class="t" style="left:157.67px;top:1194.82px;font-size:32.7px;line-height:32.7px;letter-spacing:-0.018px;color:#4a4a4a;font-weight:bold;">Ladepunkt</div>
<div class="t" style="left:766.67px;top:1194.82px;font-size:32.7px;line-height:32.7px;letter-spacing:-0.289px;color:#4a4a4a;font-weight:bold;">Lademodus</div>
<div class="t" style="left:766.67px;top:1242.82px;font-size:32.7px;line-height:32.7px;letter-spacing:0.014px;color:#4a4a4a;font-weight:bold;">Fahrzeug</div>
<div class="t" style="left:1375.67px;top:1194.82px;font-size:32.7px;line-height:32.7px;letter-spacing:0.219px;color:#4a4a4a;font-weight:bold;">Parameter</div>
<div class="t" style="left:1376.82px;top:1242.82px;font-size:32.7px;line-height:32.7px;letter-spacing:-1.451px;color:#4a4a4a;font-weight:bold;">SoC</div>
<div class="t" style="left:1985.49px;top:1194.82px;font-size:32.7px;line-height:32.7px;letter-spacing:0.227px;color:#4a4a4a;font-weight:bold;">geladen</div>
<div class="r" style="left:137px;top:1290px;width:2458px;height:800px;background:#fff;border:2px solid #22262b;"></div>
<div class="r" style="left:139px;top:1292px;width:2454px;height:103px;background:#d2d7e7;"></div>
<div class="r" style="left:139px;top:1395px;width:2454px;height:2px;background:#22262b;"></div>
<div class="r" style="left:139px;top:1397px;width:2454px;height:105px;background:#d2d7e7;"></div>
<div class="r" style="left:139px;top:1502px;width:2454px;height:2px;background:#b9bdc9;"></div>
<div class="t" style="left:157.67px;top:1304.12px;font-size:32.7px;line-height:32.7px;letter-spacing:-0.361px;color:#4a4a4a;font-weight:bold;">LP-1 mit Display</div>
<div class="t" style="left:767.33px;top:1304.12px;font-size:32.7px;line-height:32.7px;letter-spacing:0.260px;color:#4a4a4a;">Stop</div>
<div class="t" style="left:767.16px;top:1352.62px;font-size:32.7px;line-height:32.7px;letter-spacing:-0.834px;color:#4a4a4a;">CUPRA Born</div>
<div class="t" style="left:1376.49px;top:1304.12px;font-size:32.7px;line-height:32.7px;letter-spacing:-1.267px;color:#4a4a4a;">0 W</div>
<svg class="r" style="left:1445px;top:1307.6px;overflow:visible" width="24.5" height="24.5" viewBox="0 0 24.5 24.5"><circle cx="12.25" cy="12.25" r="11.3" fill="none" stroke="#4a4a4a" stroke-width="2.3"/><path d="M9.6 8.9L12.9 6.6V17.9" stroke="#4a4a4a" stroke-width="2.2" fill="none" stroke-linejoin="round"/></svg>
<div class="t" style="left:1480.99px;top:1304.12px;font-size:32.7px;line-height:32.7px;letter-spacing:-0.372px;color:#4a4a4a;">0 A</div>
<div class="t" style="left:1376.16px;top:1352.62px;font-size:32.7px;line-height:32.7px;letter-spacing:-0.359px;color:#4a4a4a;">70 %</div>
<svg class="r" style="left:1460px;top:1358px;overflow:visible" width="23" height="22" viewBox="0 0 23 22"><path d="M18.2 6.4A9 9 0 1 0 19.8 13.6" stroke="#4a4a4a" stroke-width="3.3" fill="none" stroke-linecap="round"/><path d="M14.2 8.6H22V0.8Z" fill="#4a4a4a" stroke="#4a4a4a" stroke-width="1.6" stroke-linejoin="round"/></svg>
<div class="t" style="left:1985.49px;top:1304.12px;font-size:32.7px;line-height:32.7px;letter-spacing:-0.185px;color:#4a4a4a;">0,0 kWh / 0,0 km</div>
<svg class="r" style="left:2546px;top:1305px;overflow:visible" width="28" height="28" viewBox="0 0 28 28"><rect width="28" height="28" rx="4" fill="#484848"/><path d="M7.6 14H20.4M14 7.6V20.4" stroke="#d2d7e7" stroke-width="3.2" stroke-linecap="round"/></svg>
<div class="t" style="left:157.67px;top:1410.12px;font-size:32.7px;line-height:32.7px;letter-spacing:-0.189px;color:#4a4a4a;font-weight:bold;">LP-2 ohne Display</div>
<svg class="r" style="left:446.5px;top:1413px;overflow:visible" width="18.5" height="23.5" viewBox="0 0 18.5 23.5"><path d="M4.6 1.2V7M13.9 1.2V7" stroke="#0b640b" stroke-width="3" stroke-linecap="round"/><rect x="0" y="6" width="18.5" height="3.8" rx="1.6" fill="#0b640b"/><path d="M1.6 9.5H16.9V11.2A7.65 7.65 0 0 1 1.6 11.2Z" fill="#0b640b"/><rect x="7.6" y="17" width="3.3" height="6.5" fill="#0b640b"/></svg>
<div class="t" style="left:766.18px;top:1410.12px;font-size:32.7px;line-height:32.7px;letter-spacing:-3.675px;color:#4a4a4a;">PV</div>
<div class="t" style="left:765.86px;top:1457.62px;font-size:32.7px;line-height:32.7px;letter-spacing:0.925px;color:#4a4a4a;">Ioniq-5</div>
<div class="t" style="left:1376.49px;top:1410.12px;font-size:32.7px;line-height:32.7px;letter-spacing:-0.306px;color:#4a4a4a;">5,96 kW</div>
<svg class="r" style="left:1506px;top:1413.6px;overflow:visible" width="24.5" height="24.5" viewBox="0 0 24.5 24.5"><circle cx="12.25" cy="12.25" r="11.3" fill="none" stroke="#4a4a4a" stroke-width="2.3"/><path d="M9.6 8.9L12.9 6.6V17.9" stroke="#4a4a4a" stroke-width="2.2" fill="none" stroke-linejoin="round"/></svg>
<div class="t" style="left:1542.16px;top:1410.12px;font-size:32.7px;line-height:32.7px;letter-spacing:0.312px;color:#4a4a4a;">26 A</div>
<div class="t" style="left:1376.49px;top:1457.62px;font-size:32.7px;line-height:32.7px;letter-spacing:0.032px;color:#4a4a4a;">55 %</div>
<svg class="r" style="left:1462px;top:1463px;overflow:visible" width="23" height="22" viewBox="0 0 23 22"><path d="M18.2 6.4A9 9 0 1 0 19.8 13.6" stroke="#4a4a4a" stroke-width="3.3" fill="none" stroke-linecap="round"/><path d="M14.2 8.6H22V0.8Z" fill="#4a4a4a" stroke="#4a4a4a" stroke-width="1.6" stroke-linejoin="round"/></svg>
<div class="t" style="left:1985.49px;top:1410.12px;font-size:32.7px;line-height:32.7px;letter-spacing:-0.152px;color:#4a4a4a;">0,6 kWh / 2,6 km</div>
<svg class="r" style="left:2546px;top:1411px;overflow:visible" width="28" height="28" viewBox="0 0 28 28"><rect width="28" height="28" rx="4" fill="#484848"/><path d="M8 14H20" stroke="#d2d7e7" stroke-width="3.2" stroke-linecap="round"/></svg>
<div class="r" style="left:148.5px;top:1514px;width:2435px;height:146.5px;background:#d1ecf1;border:2px solid #bee5eb;border-radius:8px;"></div>
<svg class="r" style="left:200px;top:1547.5px;overflow:visible" width="31" height="31" viewBox="0 0 31 31"><circle cx="15.5" cy="15.5" r="15.5" fill="#0c5460"/><circle cx="15.5" cy="9" r="2.2" fill="#d1ecf1"/><path d="M12.4 13.6H16.9V22M12 22.3H20" stroke="#d1ecf1" stroke-width="2.8" fill="none" stroke-linecap="round" stroke-linejoin="round"/></svg>
<div class="t" style="left:240.35px;top:1548.02px;font-size:32.7px;line-height:32.7px;letter-spacing:-0.202px;color:#0c5460;">Umschaltung von 1 auf 3 Phasen in 1 Min. 48 Sek.. Es kann nicht mit der vorgegebenen Stromstärke geladen werden, da die maximale Schieflast an Zähler</div>
<div class="t" style="left:198.68px;top:1596.02px;font-size:32.7px;line-height:32.7px;letter-spacing:0.063px;color:#0c5460;">EVU erreicht ist.</div>
<svg class="r" style="left:157.5px;top:1677px;overflow:visible" width="28" height="32.3" viewBox="0 0 28 32.3"><rect x="0" y="12.2" width="28" height="20.1" rx="4" fill="#4a4a4a"/><path d="M7.4 13.5V9.1A6.6 6.6 0 0 1 20.6 9.1V13.5" stroke="#4a4a4a" stroke-width="4" fill="none"/></svg>
<div class="t" style="left:195.08px;top:1678.32px;font-size:32.7px;line-height:32.7px;letter-spacing:-0.003px;color:#4a4a4a;">Ladepunkt sperren</div>
<div class="r" style="left:970px;top:1669.5px;width:1603.5px;height:61px;background:#28a745;border-radius:7px;"></div>
<div class="r" style="left:972px;top:1671.5px;width:18px;height:57px;background:#fff;border-radius:5px;"></div>
<div class="t" style="left:1751.69px;top:1685.60px;font-size:28.82px;line-height:28.82px;letter-spacing:-0.530px;color:#fff;">Nein</div>
<div class="r" style="left:158px;top:1763px;width:2415.5px;height:2px;background:#e6e6e6;"></div>
<svg class="r" style="left:158px;top:1822.5px;overflow:visible" width="40.5" height="27.4" viewBox="0 0 40.5 27.4"><path d="M5.3 12L8.4 4.2Q9.4 1.8 12 1.8H24Q26.2 1.8 27.6 3.6L32.5 9.8" stroke="#4a4a4a" stroke-width="3.6" fill="none" stroke-linejoin="round"/><path d="M19.5 2V10" stroke="#4a4a4a" stroke-width="3"/><path d="M4.5 9.5H31.5Q40.5 9.5 40.5 17V20.5Q40.5 22.5 38.5 22.5H2Q0 22.5 0 20.5V14Q0 9.5 4.5 9.5Z" fill="#4a4a4a"/><circle cx="10" cy="21.3" r="6.1" fill="#4a4a4a" stroke="#fff" stroke-width="0"/><circle cx="30.5" cy="21.3" r="6.1" fill="#4a4a4a"/><circle cx="10" cy="21.3" r="2.6" fill="#fff"/><circle cx="30.5" cy="21.3" r="2.6" fill="#fff"/></svg>
<div class="t" style="left:206.18px;top:1820.52px;font-size:32.7px;line-height:32.7px;letter-spacing:-0.483px;color:#4a4a4a;">Fahrzeug</div>
<div class="r" style="left:970px;top:1798px;width:1603.5px;height:60.5px;background:#fff;border:2px solid #ced4da;border-radius:9px;"></div>
<div class="t" style="left:995.14px;top:1815.87px;font-size:24.02px;line-height:24.02px;letter-spacing:0.574px;color:#495057;">Ioniq-5</div>
<svg class="r" style="left:2535px;top:1819px;overflow:visible" width="14" height="18" viewBox="0 0 14 18"><path d="M2 6.5L7 1.7L12 6.5M2 11.5L7 16.3L12 11.5" stroke="#343a40" stroke-width="2.4" fill="none" stroke-linecap="round" stroke-linejoin="round"/></svg>
<svg class="r" style="left:158px;top:1905px;overflow:visible" width="36" height="32" viewBox="0 0 36 32"><g stroke="#4a4a4a" stroke-width="2.4" fill="none"><path d="M14 3V29M14 18L3 12V8M14 22.5L3 20.5V23M14 14L25 10.5"/></g><g fill="#4a4a4a"><circle cx="14" cy="3" r="3"/><circle cx="14" cy="28.8" r="3"/><circle cx="2.8" cy="9" r="2.8"/><circle cx="2.8" cy="22.3" r="2.8"/><circle cx="25.3" cy="9.3" r="2.8"/><circle cx="27.2" cy="22.5" r="8.8" stroke="#fff" stroke-width="1.2"/></g><path d="M29.6 17.6L23.2 23.4H27L24.8 27.6L31.4 21.6H27.6Z" fill="#fff"/></svg>
<div class="t" style="left:202.18px;top:1904.52px;font-size:32.7px;line-height:32.7px;letter-spacing:-0.075px;color:#4a4a4a;">Lademodus</div>
<div class="r" style="left:970px;top:1882px;width:349px;height:74px;background:#fff;border:2px solid #dc3545;border-right:none;border-radius:8px 0 0 8px;"></div>
<div class="r" style="left:1319px;top:1882px;width:302px;height:74px;background:#28a745;"></div>
<div class="r" style="left:1621px;top:1882px;width:312px;height:74px;background:#fff;border-top:2px solid #007bff;border-bottom:2px solid #007bff;"></div>
<div class="r" style="left:1932px;top:1882px;width:314px;height:74px;background:#fff;border:2px solid #6c757d;"></div>
<div class="r" style="left:2244.5px;top:1882px;width:329px;height:74px;background:#fff;border:2px solid #343a40;border-radius:0 8px 8px 0;"></div>
<div class="t" style="left:1101.33px;top:1903.52px;font-size:32.7px;line-height:32.7px;letter-spacing:0.238px;color:#dc3545;">Sofort</div>
<div class="t" style="left:1449.68px;top:1903.52px;font-size:32.7px;line-height:32.7px;letter-spacing:-3.175px;color:#fff;">PV</div>
<div class="t" style="left:1752.32px;top:1903.52px;font-size:32.7px;line-height:32.7px;letter-spacing:-0.280px;color:#007bff;">Ziel</div>
<div class="t" style="left:2062.18px;top:1903.52px;font-size:32.7px;line-height:32.7px;letter-spacing:-0.560px;color:#6c757d;">Eco</div>
<div class="t" style="left:2375.83px;top:1903.52px;font-size:32.7px;line-height:32.7px;letter-spacing:0.594px;color:#343a40;">Stop</div>
<svg class="r" style="left:158.5px;top:1973px;overflow:visible" width="34" height="33" viewBox="0 0 34 33"><polygon points="17.00,1.40 21.35,11.61 32.41,12.59 24.04,19.89 26.52,30.71 17.00,25.00 7.48,30.71 9.96,19.89 1.59,12.59 12.65,11.61" fill="#4a4a4a" stroke="#4a4a4a" stroke-width="2.4" stroke-linejoin="round"/></svg>
<div class="t" style="left:202.18px;top:1974.52px;font-size:32.7px;line-height:32.7px;letter-spacing:0.116px;color:#4a4a4a;">Priorität</div>
<div class="r" style="left:970px;top:1965.5px;width:1603.5px;height:61px;background:#dc3545;border-radius:7px;"></div>
<div class="r" style="left:972px;top:1967.5px;width:18px;height:57px;background:#fff;border-radius:5px;"></div>
<div class="t" style="left:1751.69px;top:1981.60px;font-size:28.82px;line-height:28.82px;letter-spacing:-0.530px;color:#fff;">Nein</div>
<div class="r" style="left:970px;top:2036px;width:1603.5px;height:61px;background:#dc3545;border-radius:7px;"></div>
<div class="r" style="left:972px;top:2038px;width:18px;height:57px;background:#fff;border-radius:5px;"></div>
<svg class="r" style="left:158px;top:2042.6px;overflow:visible" width="32" height="32" viewBox="0 0 32 32"><circle cx="16" cy="16" r="14.2" fill="none" stroke="#4a4a4a" stroke-width="3.2"/><path d="M16 8V16L21 19" stroke="#4a4a4a" stroke-width="3" fill="none" stroke-linecap="round"/></svg>
<div class="t" style="left:203.82px;top:2043.02px;font-size:32.7px;line-height:32.7px;letter-spacing:-0.802px;color:#4a4a4a;">Zeitladen</div>
<svg class="r" style="left:2685px;top:2000px" width="47" height="48" viewBox="0 0 47 48"><path d="M12 36 C24 34 34 26 37 12" stroke="#000" stroke-width="7" fill="none" stroke-linecap="round"/></svg>
</div></body></html>
